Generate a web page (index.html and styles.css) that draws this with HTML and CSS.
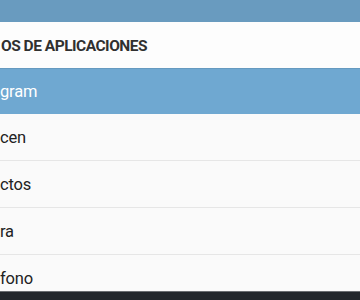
FILE: index.html
```html
<!DOCTYPE html>
<html lang="es">
<head>
<meta charset="utf-8">
<link rel="stylesheet" href="styles.css">
</head>
<body>
<div class="screen">
  <div class="topbar"></div>
  <div class="header">OS DE APLICACIONES</div>
  <ul class="list">
    <li class="item selected">gram</li>
    <li class="item">cen</li>
    <li class="item">ctos</li>
    <li class="item">ra</li>
    <li class="item">fono</li>
  </ul>
  <div class="navbar"></div>
</div>
</body>
</html>
```
FILE: styles.css
```css
html, body {
  margin: 0;
  padding: 0;
}
body {
  width: 360px;
  height: 300px;
  overflow: hidden;
  font-family: Roboto, "Liberation Sans", sans-serif;
  background: #fafafa;
}
.screen {
  display: flex;
  flex-direction: column;
  height: 300px;
}
.topbar {
  height: 22px;
  flex: none;
  background: #699bbf;
  box-shadow: 0 1px 1px rgba(0,0,0,0.15);
}
.header {
  height: 46px;
  flex: none;
  background: #fdfdfd;
  display: flex;
  align-items: center;
  padding-left: 1px;
  padding-top: 2px;
  box-sizing: border-box;
  font-weight: 700;
  font-size: 15.5px;
  color: #303030;
  letter-spacing: -0.5px;
}
.list {
  list-style: none;
  margin: 0;
  padding: 0;
  flex: 1;
  overflow: hidden;
  display: flex;
  flex-direction: column;
}
.item {
  height: 47px;
  flex: none;
  box-sizing: border-box;
  display: flex;
  align-items: center;
  padding-left: 0;
  font-size: 16.5px;
  letter-spacing: -0.2px;
  color: #222222;
  background: #fafafa;
  border-bottom: 1px solid #e6e6e6;
}
.item.selected {
  height: 46px;
  background: #6fa8d1;
  color: #ffffff;
  border-bottom: none;
  box-shadow: inset 0 1px 0 rgba(0,0,0,0.08);
}
.navbar {
  height: 8px;
  flex: none;
  background: #24282d;
  border-top: 1px solid #6b6e72;
}
```
